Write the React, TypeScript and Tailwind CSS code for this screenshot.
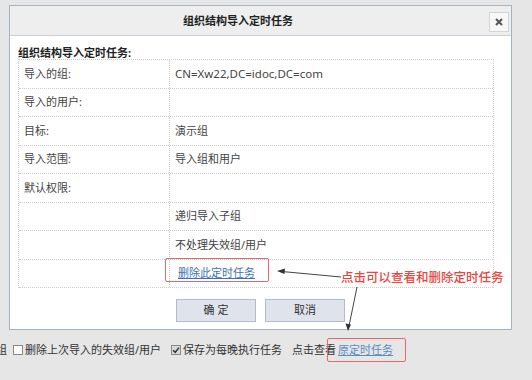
const rows = [
  { label: '导入的组:', value: 'CN=Xw22,DC=idoc,DC=com', latin: true },
  { label: '导入的用户:', value: '' },
  { label: '目标:', value: '演示组' },
  { label: '导入范围:', value: '导入组和用户' },
  { label: '默认权限:', value: '' },
  { label: '', value: '递归导入子组' },
  { label: '', value: '不处理失效组/用户' },
];

function CheckBox({ checked }: { checked?: boolean }) {
  return (
    <svg width="10" height="10" viewBox="0 0 10 10" className="shrink-0">
      <rect x="0.5" y="0.5" width="9" height="9" fill={checked ? '#d9d9d9' : '#fff'} stroke="#8a8a8a" />
      {checked && <path d="M2 5.2 L4.2 7.3 L8 2.6" fill="none" stroke="#333" strokeWidth="1.5" />}
    </svg>
  );
}

export default function App() {
  return (
    <div
      className="relative w-[532px] h-[380px] overflow-hidden bg-[#e6e6e6] text-[#333] text-[11px]"
      style={{ fontFamily: '"Noto Sans", "Noto Sans CJK SC", sans-serif' }}
    >
      <div className="pt-[5px] pl-[9px]">
        <div className="w-[503px] h-[325px] border border-[#a6b3c2] bg-white flex flex-col">
          <div className="h-[30px] bg-[#eeeeee] border-b border-[#c9d1db] flex items-center pt-[2px]">
            <div className="flex-1 text-center font-bold text-[11px] text-[#222]">组织结构导入定时任务</div>
            <div className="w-[45px] flex justify-end pr-[2px]">
              <div className="w-[20px] h-[20px] bg-[#f7f7f7] border border-[#d4d4d4] flex items-center justify-center">
                <svg width="8" height="8" viewBox="0 0 8 8">
                  <path d="M1 1 L7 7 M7 1 L1 7" stroke="#555" strokeWidth="2" />
                </svg>
              </div>
            </div>
          </div>
          <div className="pl-[8px] pt-[11px]">
            <div className="font-bold leading-[12px] text-[#222]">组织结构导入定时任务:</div>
            <div className="w-[476px] border-t border-l border-r border-dotted border-[#cccccc]">
              {rows.map((r, i) => (
                <div key={i} className="flex h-[28.5px] border-b border-dotted border-[#cccccc]">
                  <div className="w-[151px] border-r border-dotted border-[#cccccc] flex items-center pl-[5px] text-[#444]">
                    {r.label}
                  </div>
                  <div className={`flex-1 flex items-center pl-[5px] text-[#444] ${r.latin ? 'text-[11.5px]' : ''}`}>
                    {r.value}
                  </div>
                </div>
              ))}
              <div className="flex h-[28.5px] border-b border-dotted border-[#cccccc]">
                <div className="w-[151px] border-r border-dotted border-[#cccccc]" />
                <div className="flex-1 flex items-center pl-[8px]">
                  <span className="text-[#3d74b0] underline">删除此定时任务</span>
                </div>
              </div>
            </div>
            <div className="flex justify-center gap-[9px] mt-[11px] pr-[8px]">
              <div className="w-[80px] h-[23px] bg-[#dfe4ec] border border-[#b3bdca] flex items-center justify-center text-[#333]">
                确 定
              </div>
              <div className="w-[80px] h-[23px] bg-[#dfe4ec] border border-[#b3bdca] flex items-center justify-center text-[#333]">
                取消
              </div>
            </div>
          </div>
        </div>
      </div>

      <div className="flex items-center mt-[13px] ml-[-4px] leading-[14px] text-[#333] whitespace-nowrap">
        <span>组</span>
        <span className="ml-[6px]"><CheckBox /></span>
        <span className="ml-[2px]">删除上次导入的失效组/用户</span>
        <span className="ml-[10px]"><CheckBox checked /></span>
        <span className="ml-[2px]">保存为每晚执行任务</span>
        <span className="ml-[10px]">点击查看</span>
        <span className="ml-[2px] text-[#5b8cc4] underline">原定时任务</span>
      </div>

      <div className="absolute left-[165px] top-[258px] w-[104px] h-[24px] border border-[#e46a6a] rounded-[2px]" />
      <div className="absolute left-[327px] top-[338px] w-[79px] h-[24px] border border-[#e46a6a] rounded-[2px]" />
      <div className="absolute left-[341px] top-[270px] text-[12.5px] leading-[16px] font-medium text-[#e8463e] whitespace-nowrap">
        点击可以查看和删除定时任务
      </div>
      <svg className="absolute left-0 top-0 pointer-events-none" width="532" height="380">
        <line x1="341" y1="277" x2="282" y2="271.5" stroke="#444" strokeWidth="1" />
        <path d="M277 271 L285 268.5 L284.5 274 Z" fill="#333" />
        <line x1="357" y1="287" x2="349" y2="326" stroke="#444" strokeWidth="1" />
        <path d="M348 331 L345.5 323.5 L351 324.5 Z" fill="#333" />
      </svg>
    </div>
  );
}
